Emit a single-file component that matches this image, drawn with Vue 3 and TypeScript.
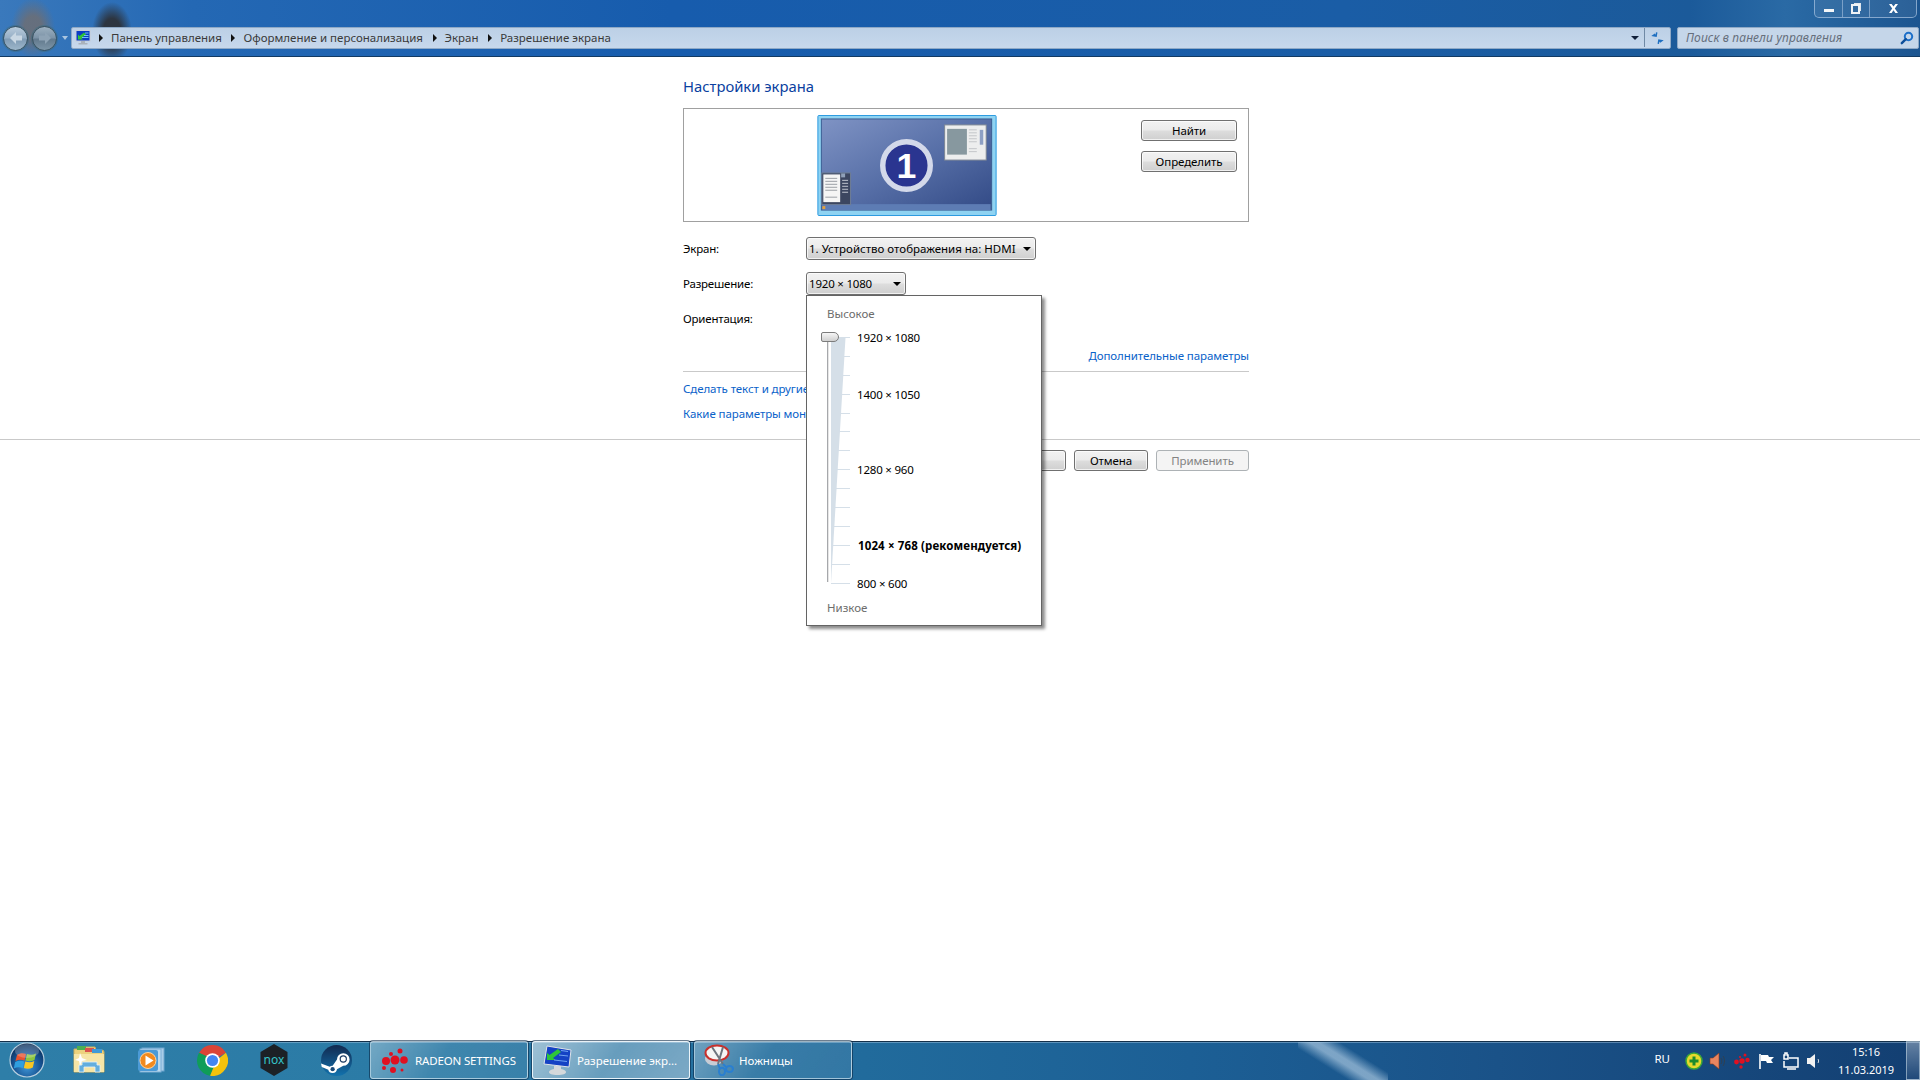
<script setup lang="ts">
interface Level {
  label?: string;
  bold?: boolean;
}

const crumbs = ["Панель управления", "Оформление и персонализация", "Экран", "Разрешение экрана"];

const levels: Level[] = [
  { label: "1920 × 1080" },
  {},
  {},
  { label: "1400 × 1050" },
  {},
  {},
  {},
  { label: "1280 × 960" },
  {},
  {},
  {},
  { label: "1024 × 768 (рекомендуется)", bold: true },
  {},
  { label: "800 × 600" },
];
</script>

<template>
  <div class="desktop">
    <header class="chrome">
      <div class="caption">
        <div class="win-controls">
          <button class="win-btn min"><span></span></button>
          <button class="win-btn max"><span></span></button>
          <button class="win-btn close">
            <svg width="13" height="11" viewBox="0 0 13 11"><path d="M2 1h2.600l1.900 2.600L8.400 1H11L7.800 5.400 11 10H8.400L6.500 7.200 4.600 10H2l3.200-4.600z" fill="#fff" /></svg>
          </button>
        </div>
      </div>
      <div class="navbar">
        <div class="nav-arrows">
          <span class="nav-ball">
            <svg width="14" height="12" viewBox="0 0 14 12"><path d="M7 0 1 6l6 6V8.500h6v-5H7z" fill="#c9d7e3" /></svg>
          </span>
          <span class="nav-ball">
            <svg width="14" height="12" viewBox="0 0 14 12"><path d="M7 0l6 6-6 6V8.500H1v-5h6z" fill="#8ea3b5" /></svg>
          </span>
          <i class="nav-drop"></i>
        </div>
        <div class="address">
          <svg class="addr-icon" width="16" height="16" viewBox="0 0 16 16">
            <rect x="1" y="0.500" width="14" height="10.500" fill="#0b3cc4" stroke="#c5ccd6" />
            <path d="M3 9.500V4.500L4.500 6 9 2.500l2 2L6.500 8 8 9.500z" fill="#2fc437" />
            <path d="M7 7.500h6.500M9 5.500h4.500M10 3h3.500" stroke="#6fc0f5" />
            <path d="M6 11h4v2h2.500v1.500h-9V13H6z" fill="#aab2bb" />
          </svg>
          <template v-for="c in crumbs" :key="c">
            <i class="crumb-arrow"></i>
            <span class="crumb">{{ c }}</span>
          </template>
          <i class="addr-drop"></i>
          <span class="addr-refresh">
            <svg width="15" height="14" viewBox="0 0 15 14">
              <path d="M1 6l3-3 1 1V1.500h1.500V6H1zM14 8l-3 3-1-1v2.500H8.500V8H14z" fill="#1f6fc0" transform="rotate(10 7 7)" />
            </svg>
          </span>
        </div>
        <div class="search">
          <span class="search-text">Поиск в панели управления</span>
          <svg width="14" height="14" viewBox="0 0 14 14">
            <circle cx="8.500" cy="5.500" r="3.700" fill="none" stroke="#1c6fc9" stroke-width="2" />
            <path d="M5.800 8.200 1.800 12.200" stroke="#0d4f9a" stroke-width="2.400" stroke-linecap="round" />
          </svg>
        </div>
      </div>
    </header>

    <main class="content">
      <section class="panel">
        <h1 class="heading">Настройки экрана</h1>
        <div class="preview">
          <svg class="monitor" width="180" height="101" viewBox="0 0 181 102">
            <defs>
              <linearGradient id="scr" x1="0" y1="0" x2="1" y2="1">
                <stop offset="0" stop-color="#7f93c4" />
                <stop offset="0.500" stop-color="#5870a8" />
                <stop offset="1" stop-color="#324a86" />
              </linearGradient>
            </defs>
            <rect x="0.500" y="0.500" width="180" height="101" rx="1" fill="#8fd3f2" stroke="#2b9ae0" />
            <rect x="4" y="4" width="172" height="92" fill="url(#scr)" stroke="#3a5d92" />
            <rect x="5" y="90" width="170" height="6" fill="#5d7cb4" />
            <circle cx="90" cy="51" r="24" fill="#2a3590" stroke="#d3d9ea" stroke-width="5.500" />
            <text x="90" y="64" text-anchor="middle" class="mon-num">1</text>
            <rect x="128.500" y="10" width="42" height="35.500" fill="#edeeee" stroke="#7d8694" />
            <rect x="131" y="14" width="20" height="26" fill="#87989f" />
            <path d="M153 15h8M153 18h8M153 21h8M153 24h8M153 27h8M153 34h8M153 37h8" stroke="#c3c5c8" />
            <rect x="164" y="15" width="3.500" height="15" fill="#8ea0c4" />
            <rect x="4.500" y="58.500" width="29" height="32" fill="#3c4660" stroke="#6f7e96" />
            <rect x="6" y="60" width="17" height="28" fill="#f5f5f5" />
            <path d="M8 64h12M8 67h12M8 70h12M8 73h12M8 76h12M8 83h12" stroke="#9b9fa5" />
            <path d="M25 66h6M25 69h6M25 72h6M25 75h6M25 78h6" stroke="#c2c6d0" />
            <rect x="24" y="59" width="4" height="4" fill="#90a0b8" />
            <rect x="5" y="92" width="3" height="3" fill="#e0a040" />
          </svg>
          <div class="preview-actions">
            <button class="btn wide">Найти</button>
            <button class="btn wide">Определить</button>
          </div>
        </div>

        <div class="form">
          <label class="form-label">Экран:</label>
          <div class="combo screen-combo">1. Устройство отображения на: HDMI<i class="combo-arrow"></i></div>
          <label class="form-label">Разрешение:</label>
          <div class="res-cell">
            <div class="combo res-combo">1920 × 1080<i class="combo-arrow"></i></div>
            <div class="popup">
              <div class="popup-cap">Высокое</div>
              <div class="slider">
                <svg class="wedge" width="34" height="265" viewBox="0 0 34 265">
                  <path d="M10 9.500H24.500L10 255z" fill="#d5dfe8" />
                  <path d="M6.500 9v245" stroke="#a6a8ab" />
                  <path d="M7.500 14v240" stroke="#e6e6e6" />
                </svg>
                <div class="thumb"></div>
                <div v-for="(lv, i) in levels" :key="i" class="level">
                  <i class="tick"></i>
                  <span v-if="lv.label" class="level-label" :class="{ bold: lv.bold }">{{ lv.label }}</span>
                </div>
              </div>
              <div class="popup-cap low">Низкое</div>
            </div>
          </div>
          <label class="form-label">Ориентация:</label>
          <div class="combo orient-combo"></div>
        </div>

        <div class="advanced"><a class="link">Дополнительные параметры</a></div>
        <a class="link block">Сделать текст и другие</a>
        <a class="link block">Какие параметры мон</a>
      </section>

      <div class="footer">
        <div class="footer-btns">
          <button class="btn ok"></button>
          <button class="btn cancel">Отмена</button>
          <button class="btn apply" disabled>Применить</button>
        </div>
      </div>
    </main>

    <footer class="taskbar">
      <span class="orb">
        <svg width="36" height="36" viewBox="0 0 36 36">
          <defs>
            <radialGradient id="orbg" cx="0.500" cy="0.700" r="0.700">
              <stop offset="0" stop-color="#3f97d8" />
              <stop offset="0.600" stop-color="#15508f" />
              <stop offset="1" stop-color="#0b2a50" />
            </radialGradient>
          </defs>
          <circle cx="18" cy="18" r="17" fill="url(#orbg)" stroke="#b7cfdf" stroke-width="1.200" />
          <path d="M8 13c3-2 6-2 9-1l-1.500 6.500c-3-1-6-1-9 .5z" fill="#e8532f" />
          <path d="M18 12c3 1 6 1 9-.5L25.500 18c-3 1.500-6 1.500-9 .5z" fill="#8cc63f" />
          <path d="M6.200 20c3-1.500 6-1.500 9-.5L13.800 26c-3-1-6-1-9 .5z" fill="#2f9fe0" />
          <path d="M16.300 19.500c3 1 6 1 9-.5L23.800 25.500c-3 1.500-6 1.500-9 .5z" fill="#f9c623" />
          <ellipse cx="18" cy="9" rx="12" ry="7" fill="#fff" opacity="0.220" />
        </svg>
      </span>
      <div class="pins">
        <span class="pin">
          <svg width="32" height="30" viewBox="0 0 32 30">
            <path d="M1 4h10l2-2h9l1 3h6a2 2 0 0 1 2 2v20H1z" fill="#ecd27e" stroke="#c9ad5c" />
            <rect x="4" y="1" width="9" height="4" fill="#4caf50" />
            <rect x="12" y="3" width="9" height="4" fill="#d9534f" />
            <rect x="19" y="4" width="10" height="4" fill="#3f9ad9" />
            <path d="M1 9h30v18H1z" fill="#f6e5a6" />
            <path d="M6 27v-7h3v-3h15v3h3v7h-5v-5H11v5z" fill="#63aede" stroke="#e6f2fa" stroke-width="0.800" />
            <path d="M7 8l2 5 5 2-5 1-2 5-1-5-4-1 4-2z" fill="#fff" />
          </svg>
        </span>
        <span class="pin">
          <svg width="28" height="26" viewBox="0 0 28 26">
            <rect x="5" y="1" width="22" height="23" fill="#a9cde8" stroke="#6fa6cf" />
            <rect x="3" y="2" width="21" height="23" fill="#bcd9ee" stroke="#7aaed6" />
            <rect x="1" y="3" width="20" height="21" rx="2" fill="#4b9ad6" />
            <circle cx="11" cy="13.500" r="8" fill="#f28a1e" stroke="#ffd5a0" />
            <path d="M8.500 8.500v10l8-5z" fill="#fff" />
          </svg>
        </span>
        <span class="pin">
          <svg width="31" height="31" viewBox="0 0 32 32">
            <path d="M16 16 29.860 8A16 16 0 0 0 2.140 8z" fill="#db4437" />
            <path d="M2.140 8A16 16 0 0 0 13.500 31.800L20 16z" fill="#0f9d58" />
            <path d="M29.860 8A16 16 0 0 1 13.500 31.800L20 16z" fill="#f4c20d" />
            <circle cx="16" cy="16" r="7.500" fill="#fff" />
            <circle cx="16" cy="16" r="5.800" fill="#4285f4" />
          </svg>
        </span>
        <span class="pin">
          <svg width="28" height="32" viewBox="0 0 28 32">
            <path d="M14 0 27.500 8v16L14 32 .5 24V8z" fill="#1c2126" />
            <text x="14" y="20" text-anchor="middle" class="nox">nox</text>
          </svg>
        </span>
        <span class="pin">
          <svg width="31" height="31" viewBox="0 0 32 32">
            <defs>
              <linearGradient id="stm" x1="0" y1="0" x2="0" y2="1">
                <stop offset="0" stop-color="#12294f" />
                <stop offset="1" stop-color="#1272ad" />
              </linearGradient>
            </defs>
            <circle cx="16" cy="16" r="16" fill="url(#stm)" />
            <path d="M0 19l9 3.500a4.500 4.500 0 0 1 3-1l4.500-6.500a6.500 6.500 0 1 1 6.500 6.500L16.500 25a4.600 4.600 0 0 1-9 .5L.8 22.800z" fill="#fff" />
            <circle cx="23" cy="14.500" r="3.800" fill="#1a3a63" />
            <circle cx="23" cy="14.500" r="2.600" fill="#fff" />
            <circle cx="12" cy="25" r="2.200" fill="#1a4a78" />
          </svg>
        </span>
      </div>

      <div class="tasks">
        <div class="task">
          <svg class="task-icon" width="30" height="28" viewBox="0 0 30 28">
            <g fill="#e01020">
              <circle cx="15" cy="14" r="4.500" /><circle cx="6" cy="15" r="4" /><circle cx="24" cy="14" r="3.800" />
              <circle cx="13" cy="24" r="3" /><circle cx="20" cy="5" r="2.500" /><circle cx="11" cy="8" r="2" />
              <circle cx="22" cy="24" r="1.500" /><circle cx="4" cy="22" r="2" />
            </g>
          </svg>
          <span class="radeon">RADEON SETTINGS</span>
        </div>
        <div class="task active">
          <svg class="task-icon" width="30" height="32" viewBox="0 0 30 32">
            <path d="M5 2 29 6 27 23 2 20z" fill="#1442c4" stroke="#dfe4e8" />
            <path d="M5 16V9l2.500 2L16 5l3 3-8 6 2.500 2z" fill="#2dc63a" />
            <path d="M12 16l13 1.500M17 11l9 1M19 6.500l7 1" stroke="#6fa2f2" />
            <path d="M12 22h7v3c3 .5 5 1.500 5 3 0 2-3 3-8.500 3S7 30 7 28c0-1.500 2-2.500 5-3z" fill="#d4d8db" />
          </svg>
          <span>Разрешение экр...</span>
        </div>
        <div class="task">
          <svg class="task-icon" width="30" height="32" viewBox="0 0 30 32">
            <ellipse cx="10" cy="15" rx="9" ry="6.500" fill="#c8ccd4" />
            <ellipse cx="13" cy="9" rx="11.500" ry="7.500" fill="#f4f4f4" stroke="#c9302c" stroke-width="2" />
            <path d="M8 3l11 17M19 3l-5 17" stroke="#6d747d" stroke-width="2" />
            <path d="M19 20l3 3M14 20l2 5" stroke="#2a7fd0" stroke-width="2" />
            <ellipse cx="18" cy="27.500" rx="3" ry="3.800" fill="none" stroke="#2a7fd0" stroke-width="2" />
            <ellipse cx="25.500" cy="25" rx="3.500" ry="3" fill="none" stroke="#2a7fd0" stroke-width="2" />
          </svg>
          <span>Ножницы</span>
        </div>
      </div>

      <div class="tray">
        <span class="lang">RU</span>
        <div class="tray-icons">
          <svg width="18" height="18" viewBox="0 0 18 18">
            <circle cx="9" cy="9" r="8" fill="#e6d92c" stroke="#3aa63a" stroke-width="1.500" />
            <path d="M9 4.500v9M4.500 9h9" stroke="#1d8b2c" stroke-width="3" />
          </svg>
          <svg width="18" height="18" viewBox="0 0 18 18">
            <path d="M1 6h3l6-5v16l-6-5H1z" fill="#e88560" stroke="#8a3a1c" stroke-width="0.600" />
            <path d="M12 6c1 2 1 4 0 6M14 4c2 3 2 7 0 10" stroke="#304050" fill="none" />
          </svg>
          <svg width="18" height="18" viewBox="0 0 18 18">
            <g fill="#e01020">
              <circle cx="9" cy="9" r="2.700" /><circle cx="3.500" cy="10" r="2.400" /><circle cx="14.500" cy="8" r="2.200" />
              <circle cx="8" cy="15" r="1.700" /><circle cx="12" cy="3" r="1.500" /><circle cx="7" cy="5" r="1.100" />
            </g>
          </svg>
          <svg width="18" height="18" viewBox="0 0 18 18">
            <path d="M3 2v15" stroke="#fff" stroke-width="1.600" />
            <path d="M4 3h7l1 2h5l-3 3 2 3h-6l-1-2H4z" fill="#fff" />
          </svg>
          <svg width="18" height="18" viewBox="0 0 18 18">
            <path d="M4 1h2v2h1v4H3V3h1zM8 6h9v9H3V9" fill="none" stroke="#fff" stroke-width="1.500" />
            <path d="M6 17h9" stroke="#fff" stroke-width="1.500" />
          </svg>
          <svg width="18" height="18" viewBox="0 0 18 18">
            <path d="M2 6h3l5-4v14l-5-4H2z" fill="#f2f2f2" />
            <path d="M13 7c.8 1.300.8 2.700 0 4" stroke="#d0d8e0" fill="none" />
          </svg>
        </div>
        <div class="clock">
          <span>15:16</span>
          <span>11.03.2019</span>
        </div>
        <div class="show-desktop"></div>
      </div>
    </footer>
  </div>
</template>

<style scoped>
.desktop {
  width: 1920px;
  height: 1080px;
  display: flex;
  flex-direction: column;
  overflow: hidden;
  background: #fff;
  font-family: "Noto Sans", "Liberation Sans", sans-serif;
  font-size: 11.5px;
  color: #000;
}

/* window frame */
.chrome {
  height: 57px;
  flex: none;
  box-sizing: border-box;
  border-bottom: 1px solid #123a63;
  background:
    radial-gradient(ellipse 22px 30px at 33px 28px, rgba(110, 110, 115, 0.85) 40%, transparent),
    radial-gradient(ellipse 20px 30px at 112px 32px, rgba(45, 50, 58, 0.95) 45%, transparent),
    linear-gradient(90deg, #3a79bc 0, #2468b4 10%, #175cad 35%, #1a5da6 70%, #1b5a9a 88%, #2a6aa5 93%, #1c5590 100%);
}

.caption {
  height: 27px;
  display: flex;
  justify-content: flex-end;
  padding-right: 3px;
}

.win-controls {
  display: flex;
  height: 18px;
  border: 1px solid rgba(170, 195, 225, 0.7);
  border-top: none;
  border-radius: 0 0 5px 5px;
  box-sizing: border-box;
  background: rgba(255, 255, 255, 0.07);
}

.win-btn {
  padding: 0;
  border: none;
  background: none;
  display: flex;
  align-items: center;
  justify-content: center;
  height: 100%;
  border-right: 1px solid rgba(170, 195, 225, 0.6);
}

.win-btn.min { width: 28px; }
.win-btn.max { width: 27px; }
.win-btn.close { width: 46px; border-right: none; }

.min span {
  width: 10px;
  height: 3px;
  background: #f4f6f8;
  margin-top: 4px;
}

.max span {
  width: 5px;
  height: 6px;
  margin-right: 2px;
  margin-top: 1px;
  border: 2px solid #eef2f6;
  box-shadow: 2px -2px 0 -1px #dfe6ee;
}

.navbar {
  display: flex;
  height: 22px;
  align-items: stretch;
}

.nav-arrows {
  width: 71px;
  flex: none;
  display: flex;
  align-items: center;
  padding-left: 3px;
  box-sizing: border-box;
  gap: 4px;
}

.nav-ball {
  width: 25px;
  height: 25px;
  flex: none;
  border-radius: 50%;
  display: flex;
  align-items: center;
  justify-content: center;
  box-sizing: border-box;
  border: 1px solid #36505f;
  background: linear-gradient(#b8cadb, #95aec5 48%, #7f9bb4 52%, #9db6ca);
  box-shadow: 0 0 0 1px rgba(60, 110, 130, 0.55);
}

.nav-ball + .nav-ball {
  background: linear-gradient(#9cb0c0, #7b92a6 48%, #62798d 52%, #7d96a8);
}

.nav-drop {
  margin-left: 1px;
  border: 3px solid transparent;
  border-top: 4px solid #a9c5e0;
  border-bottom: none;
}

.address {
  width: 1600px;
  flex: none;
  display: flex;
  align-items: center;
  box-sizing: border-box;
  border: 1px solid #8fa9c6;
  border-radius: 2px;
  background: linear-gradient(#bcd0e6, #c7d8ec);
  padding-left: 3px;
  padding-bottom: 1px;
  color: #3a3a3a;
}

.addr-icon {
  margin-right: 4px;
  flex: none;
}

.crumb-arrow {
  width: 0;
  height: 0;
  border: 4px solid transparent;
  border-left: 4px solid #111;
  border-right: none;
  margin: 0 8px 0 4px;
  flex: none;
}

.crumb {
  white-space: nowrap;
  margin-right: 5.600px;
}

.addr-drop {
  margin-left: auto;
  border: 4px solid transparent;
  border-top: 4px solid #10203a;
  border-bottom: none;
  margin-right: 5px;
}

.addr-refresh {
  width: 25px;
  align-self: stretch;
  border-left: 1px solid #6f89a5;
  display: flex;
  align-items: center;
  justify-content: center;
}

.search {
  width: 242px;
  margin-left: 6px;
  flex: none;
  display: flex;
  align-items: center;
  justify-content: space-between;
  box-sizing: border-box;
  border: 1px solid #8fa9c6;
  border-radius: 2px;
  background: #c5d6e9;
  padding: 0 4px 1px 8px;
}

.search-text {
  font-style: italic;
  font-size: 12px;
  letter-spacing: 0.1px;
  color: #666f7c;
}

/* page */
.content {
  flex: 1;
  min-height: 0;
}

.panel {
  width: 566px;
  margin-left: 683px;
}

.heading {
  margin: 18px 0 11px;
  font-size: 14.800px;
  line-height: 22px;
  font-weight: 400;
  color: #0b3f9f;
}

.preview {
  height: 114px;
  box-sizing: border-box;
  border: 1px solid #a0a0a0;
  display: flex;
  align-items: flex-start;
  padding: 6px 11px 0 133px;
}

.monitor {
  flex: none;
}

.mon-num {
  font-family: "Liberation Sans", sans-serif;
  font-weight: 700;
  font-size: 36px;
  fill: #fff;
}

.nox {
  font-family: "Noto Sans", sans-serif;
  font-size: 12px;
  fill: #35c4c8;
}

.preview-actions {
  margin-left: auto;
  padding-top: 5px;
  display: flex;
  flex-direction: column;
  gap: 10px;
}

.btn {
  height: 21px;
  padding: 0;
  box-sizing: border-box;
  border: 1px solid #707070;
  border-radius: 3px;
  background: linear-gradient(#f2f2f2 0, #ebebeb 48%, #dddddd 52%, #cfcfcf 100%);
  box-shadow: inset 0 0 0 1px rgba(255, 255, 255, 0.7);
  font: inherit;
  letter-spacing: -0.1px;
  color: #000;
}

.btn.wide { width: 96px; }
.btn.ok { width: 76px; }
.btn.cancel { width: 74px; }
.btn.apply {
  width: 93px;
  border-color: #adb2b5;
  background: #f4f4f4;
  box-shadow: none;
  color: #838383;
}

.form {
  margin-top: 15px;
  display: grid;
  grid-template-columns: 123px auto;
  grid-auto-rows: 23px;
  row-gap: 12px;
  align-items: center;
  justify-items: start;
}

.form-label {
  letter-spacing: -0.2px;
}

.combo {
  height: 23px;
  box-sizing: border-box;
  border: 1px solid #707070;
  border-radius: 3px;
  background: linear-gradient(#f2f2f2 0, #ebebeb 48%, #dddddd 52%, #cfcfcf 100%);
  box-shadow: inset 0 0 0 1px rgba(255, 255, 255, 0.7);
  display: flex;
  align-items: center;
  padding-left: 2px;
  white-space: nowrap;
  position: relative;
}

.screen-combo { width: 230px; }
.res-combo { width: 100px; letter-spacing: -0.2px; }
.orient-combo { width: 120px; }

.combo-arrow {
  position: absolute;
  right: 4px;
  top: 9px;
  border: 4px solid transparent;
  border-top: 4px solid #000;
  border-bottom: none;
}

.res-cell {
  position: relative;
}

/* resolution slider popup */
.popup {
  position: absolute;
  left: 0;
  top: 23px;
  z-index: 5;
  width: 236px;
  box-sizing: border-box;
  border: 1px solid #646464;
  background: #fff;
  box-shadow: 3px 3px 3px rgba(0, 0, 0, 0.45);
  padding: 10px 20px 9px;
}

.popup-cap {
  line-height: 16px;
  color: #6d6d6d;
}

.popup-cap.low {
  margin-top: 7px;
}

.slider {
  position: relative;
  margin-top: 6px;
}

.wedge {
  position: absolute;
  left: -6px;
  top: 0;
}

.thumb {
  position: absolute;
  left: -6px;
  top: 4px;
  width: 18px;
  height: 10px;
  box-sizing: border-box;
  border: 1px solid #7c7c7c;
  border-radius: 2px 5px 5px 2px;
  background: linear-gradient(#f6f6f6, #d0d0d0);
  z-index: 1;
}

.level {
  height: 18.920px;
  display: flex;
  align-items: center;
  padding-left: 4px;
  white-space: nowrap;
}

.tick {
  width: 19px;
  height: 1px;
  background: #d5dfe8;
  flex: none;
}

.level-label {
  margin-left: 7px;
  letter-spacing: -0.2px;
}

.level-label.bold {
  margin-left: 8px;
  font-weight: 700;
  letter-spacing: 0.13px;
}

.advanced {
  margin-top: 18px;
  padding-bottom: 7px;
  border-bottom: 1px solid #c9c9c9;
  line-height: 16px;
  text-align: right;
  margin-bottom: 9px;
}

.link {
  color: #0a62c9;
  line-height: 16px;
  letter-spacing: -0.08px;
}

.link.block {
  display: block;
  white-space: nowrap;
  margin-bottom: 9px;
}

.footer {
  margin-top: 17px;
  border-top: 1px solid #c9c9c9;
  padding-top: 10px;
}

.footer-btns {
  width: 566px;
  margin-left: 683px;
  display: flex;
  justify-content: flex-end;
  gap: 8px;
}

/* taskbar */
.taskbar {
  height: 39px;
  flex: none;
  display: flex;
  align-items: flex-start;
  box-sizing: border-box;
  color: #fff;
  box-shadow: inset 0 1px #14304a, inset 0 2px rgba(170, 205, 230, 0.45);
  background:
    linear-gradient(32deg, transparent 33%, rgba(190, 215, 235, 0.6) 47%, rgba(190, 215, 235, 0.6) 53%, transparent 67%) 1298px 0 / 90px 39px no-repeat,
    linear-gradient(90deg, #2e7ea8 0, #2b7ba6 20%, #216b9c 45%, #1c5f95 62%, #1a5288 78%, #133f72 100%);
}

.orb {
  width: 36px;
  height: 36px;
  margin: 1px 0 0 9px;
  flex: none;
}

.pins {
  display: flex;
  margin-left: 13px;
  width: 312px;
  height: 38px;
  flex: none;
  align-items: center;
}

.pin {
  width: 61.800px;
  display: flex;
  justify-content: center;
  flex: none;
}

.tasks {
  display: flex;
  gap: 4px;
  height: 38px;
  flex: none;
}

.task {
  width: 158px;
  box-sizing: border-box;
  border: 1px solid rgba(210, 230, 240, 0.7);
  border-radius: 3px;
  background: linear-gradient(125deg, rgba(255, 255, 255, 0.34), rgba(255, 255, 255, 0.1) 45%, rgba(255, 255, 255, 0.08));
  display: flex;
  align-items: center;
  padding-left: 9px;
  gap: 5px;
  white-space: nowrap;
  box-shadow: 0 0 0 1px rgba(10, 40, 70, 0.6);
}

.radeon {
  letter-spacing: -0.15px;
}

.task.active {
  background: linear-gradient(125deg, rgba(255, 255, 255, 0.55), rgba(255, 255, 255, 0.3) 50%, rgba(255, 255, 255, 0.4));
  border-color: rgba(240, 248, 252, 0.95);
}

.task-icon {
  flex: none;
}

.tray {
  margin-left: auto;
  display: flex;
  align-items: center;
  height: 100%;
}

.lang {
  margin-right: 15px;
  margin-top: -5px;
}

.tray-icons {
  display: flex;
  gap: 6px;
  margin-top: 1px;
}

.clock {
  width: 78px;
  margin-left: 4px;
  display: flex;
  flex-direction: column;
  align-items: center;
  line-height: 18px;
  font-size: 11px;
}

.show-desktop {
  width: 14px;
  height: 100%;
  margin-left: 1px;
  box-sizing: border-box;
  border: 1px solid rgba(190, 210, 225, 0.6);
  background: linear-gradient(rgba(255, 255, 255, 0.35), rgba(255, 255, 255, 0.05));
}
</style>

<style>
html,
body {
  margin: 0;
  background: #fff;
}
</style>
